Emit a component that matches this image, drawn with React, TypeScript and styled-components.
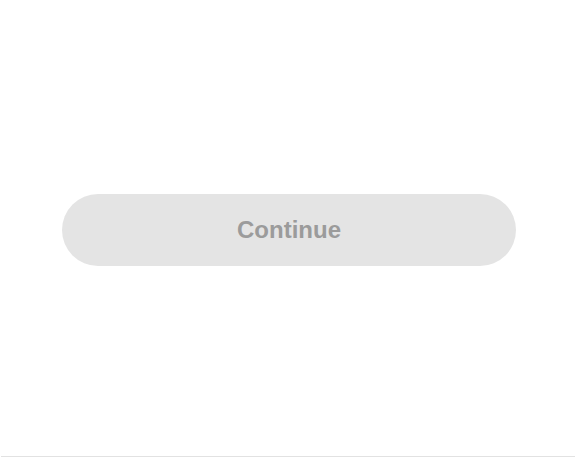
import React from 'react'
import styled, { createGlobalStyle } from 'styled-components'

const GlobalStyle = createGlobalStyle`
    html, body {
        margin: 0;
        padding: 0;
        background: #fff;
        font-family: "Liberation Sans", Arial, sans-serif;
    }
`

const PageStyle = styled.div`
    display: flex;
    flex-direction: column;
    height: 458px;
    overflow: hidden;
`

const MainStyle = styled.main`
    flex: 1;
    padding: 194px 59px 0 62px;
`

const ContinueButton = styled.button`
    display: flex;
    align-items: center;
    justify-content: center;
    width: 454px;
    height: 72px;
    border: none;
    border-radius: 36px;
    background: #e4e4e4;
    color: #9b9b9b;
    font-family: "Liberation Sans", Arial, sans-serif;
    font-size: 24px;
    font-weight: 700;
    cursor: default;
`

const FooterLine = styled.div`
    margin: 0 0 1px 1px;
    height: 1px;
    background: #e2e2e2;
`

const App = () => {
    return (
        <>
            <GlobalStyle />
            <PageStyle>
                <MainStyle>
                    <ContinueButton disabled>Continue</ContinueButton>
                </MainStyle>
                <FooterLine />
            </PageStyle>
        </>
    )
}

export default App
